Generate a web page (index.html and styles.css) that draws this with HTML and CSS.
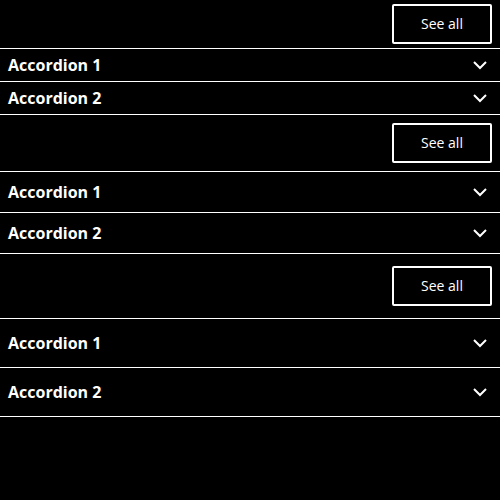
FILE: index.html
```html
<!DOCTYPE html>
<html>
<head>
<meta charset="utf-8">
<link rel="stylesheet" href="styles.css">
</head>
<body>
<div class="group sm">
  <div class="head"><button class="see-all">See all</button></div>
  <div class="acc"><span class="title">Accordion 1</span><svg class="chev" viewBox="0 0 24 24"><polyline points="6,9 12,15 18,9"/></svg></div>
  <div class="acc"><span class="title">Accordion 2</span><svg class="chev" viewBox="0 0 24 24"><polyline points="6,9 12,15 18,9"/></svg></div>
</div>
<div class="group md">
  <div class="head"><button class="see-all">See all</button></div>
  <div class="acc"><span class="title">Accordion 1</span><svg class="chev" viewBox="0 0 24 24"><polyline points="6,9 12,15 18,9"/></svg></div>
  <div class="acc"><span class="title">Accordion 2</span><svg class="chev" viewBox="0 0 24 24"><polyline points="6,9 12,15 18,9"/></svg></div>
</div>
<div class="group lg">
  <div class="head"><button class="see-all">See all</button></div>
  <div class="acc"><span class="title">Accordion 1</span><svg class="chev" viewBox="0 0 24 24"><polyline points="6,9 12,15 18,9"/></svg></div>
  <div class="acc"><span class="title">Accordion 2</span><svg class="chev" viewBox="0 0 24 24"><polyline points="6,9 12,15 18,9"/></svg></div>
</div>
</body>
</html>
```
FILE: styles.css
```css
html, body {
  margin: 0;
  padding: 0;
  background: #000;
  color: #fff;
  font-family: "Open Sans", "Noto Sans", sans-serif;
}
.group .head {
  display: flex;
  justify-content: flex-end;
  padding: 4px 8px;
  border-bottom: 1px solid #fff;
}
.md .head { padding: 8px 8px; }
.lg .head { padding: 12px 8px; }
.see-all {
  box-sizing: border-box;
  width: 100px;
  height: 40px;
  background: #000;
  color: #fff;
  border: 2px solid #fff;
  border-radius: 2px;
  font-family: "Open Sans", "Noto Sans", sans-serif;
  font-size: 14px;
  font-weight: 500;
  padding: 0 0 2px 0;
}
.acc {
  display: flex;
  align-items: center;
  justify-content: space-between;
  height: 32px;
  padding: 0 8px;
  border-bottom: 1px solid #fff;
}
.md .acc { height: 40px; }
.lg .acc { height: 48px; }
.title {
  font-size: 16px;
  font-weight: 700;
}
.chev {
  width: 24px;
  height: 24px;
  fill: none;
  stroke: #fff;
  stroke-width: 2;
}
```
